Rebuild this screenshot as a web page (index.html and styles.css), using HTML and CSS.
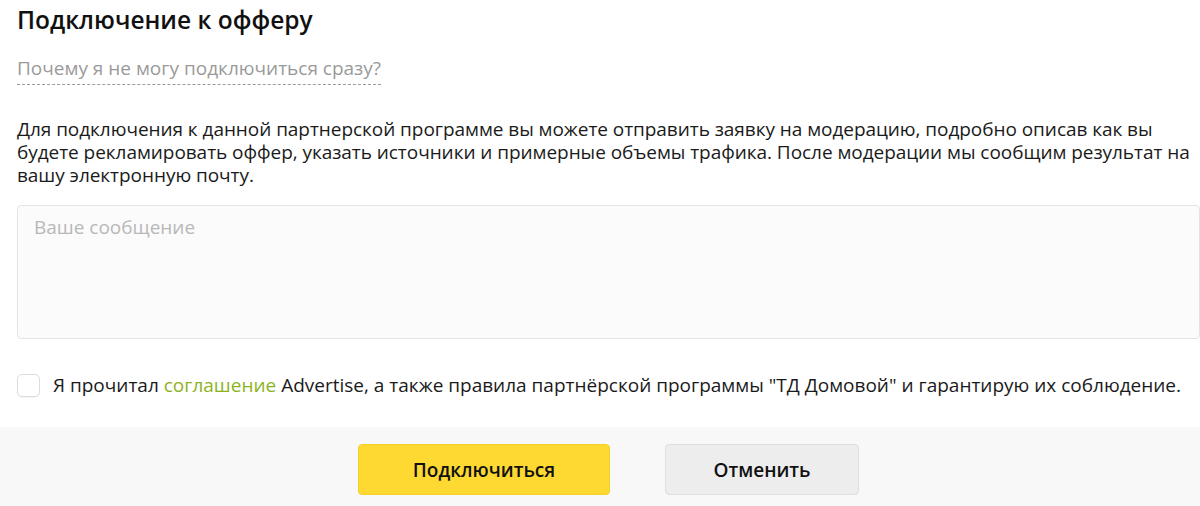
FILE: index.html
```html
<!DOCTYPE html>
<html lang="ru">
<head>
<meta charset="utf-8">
<link rel="stylesheet" href="styles.css">
</head>
<body>
<div class="content">
  <h1 class="title">Подключение к офферу</h1>
  <div class="why"><span class="why-link">Почему я не могу подключиться сразу?</span></div>
  <p class="desc">Для подключения к данной партнерской программе вы можете отправить заявку на модерацию, подробно описав как вы будете рекламировать оффер, указать источники и примерные объемы трафика. После модерации мы сообщим результат на вашу электронную почту.</p>
  <div class="message">Ваше сообщение</div>
  <label class="agree">
    <span class="check"></span>
    <span class="agree-text">Я прочитал <span class="link">соглашение</span> Advertise, а также правила партнёрской программы "ТД Домовой" и гарантирую их соблюдение.</span>
  </label>
</div>
<div class="footer">
  <button class="btn btn-primary">Подключиться</button>
  <button class="btn btn-secondary">Отменить</button>
</div>
</body>
</html>
```

FILE: styles.css
```css
html, body {
  margin: 0;
  padding: 0;
  background: #ffffff;
}
body {
  font-family: "Open Sans", "Noto Sans", sans-serif;
  color: #1a1a1a;
  width: 1200px;
  height: 506px;
  overflow: hidden;
}
.content {
  padding: 0 0 0 17px;
}
.title {
  margin: 0;
  padding-top: 4px;
  font-size: 24.5px;
  font-weight: 600;
  line-height: 32px;
  color: #111;
}
.why {
  margin-top: 19px;
  height: 30px;
}
.why-link {
  font-size: 19px;
  line-height: 26px;
  color: #9a9a9a;
  border-bottom: 1px dashed #9a9a9a;
  display: inline-block;
  padding-bottom: 3px;
}
.desc {
  margin: 33px 0 0 0;
  font-size: 19px;
  line-height: 23px;
  letter-spacing: -0.05px;
  color: #1a1a1a;
}
.message {
  margin-top: 18px;
  height: 134px;
  box-sizing: border-box;
  border: 1px solid #e3e3e3;
  border-radius: 4px;
  background: #fbfbfb;
  padding: 8px 16px;
  font-size: 19px;
  line-height: 26px;
  color: #b8b8b8;
}
.agree {
  display: flex;
  align-items: center;
  gap: 13px;
  margin-top: 34px;
  height: 24px;
}
.check {
  width: 21px;
  height: 21px;
  border: 1px solid #dcdcdc;
  border-radius: 5px;
  background: #fff;
  box-shadow: 0 1px 1px rgba(0, 0, 0, 0.04);
  flex: none;
}
.agree-text {
  font-size: 19px;
  line-height: 24px;
  color: #1a1a1a;
}
.link {
  color: #8cb31e;
}
.footer {
  margin-top: 30px;
  height: 79px;
  background: #f8f8f8;
  display: flex;
  justify-content: center;
  align-items: flex-start;
  gap: 55px;
  padding-top: 17px;
  padding-left: 17px;
  box-sizing: border-box;
}
.btn {
  height: 51px;
  border-radius: 4px;
  font-family: "Open Sans", "Noto Sans", sans-serif;
  font-size: 19px;
  font-weight: 600;
  color: #111;
  cursor: pointer;
}
.btn-primary {
  width: 252px;
  background: #fdd932;
  border: 1px solid #f5d02a;
}
.btn-secondary {
  width: 194px;
  background: #ededed;
  border: 1px solid #dedede;
}
```
